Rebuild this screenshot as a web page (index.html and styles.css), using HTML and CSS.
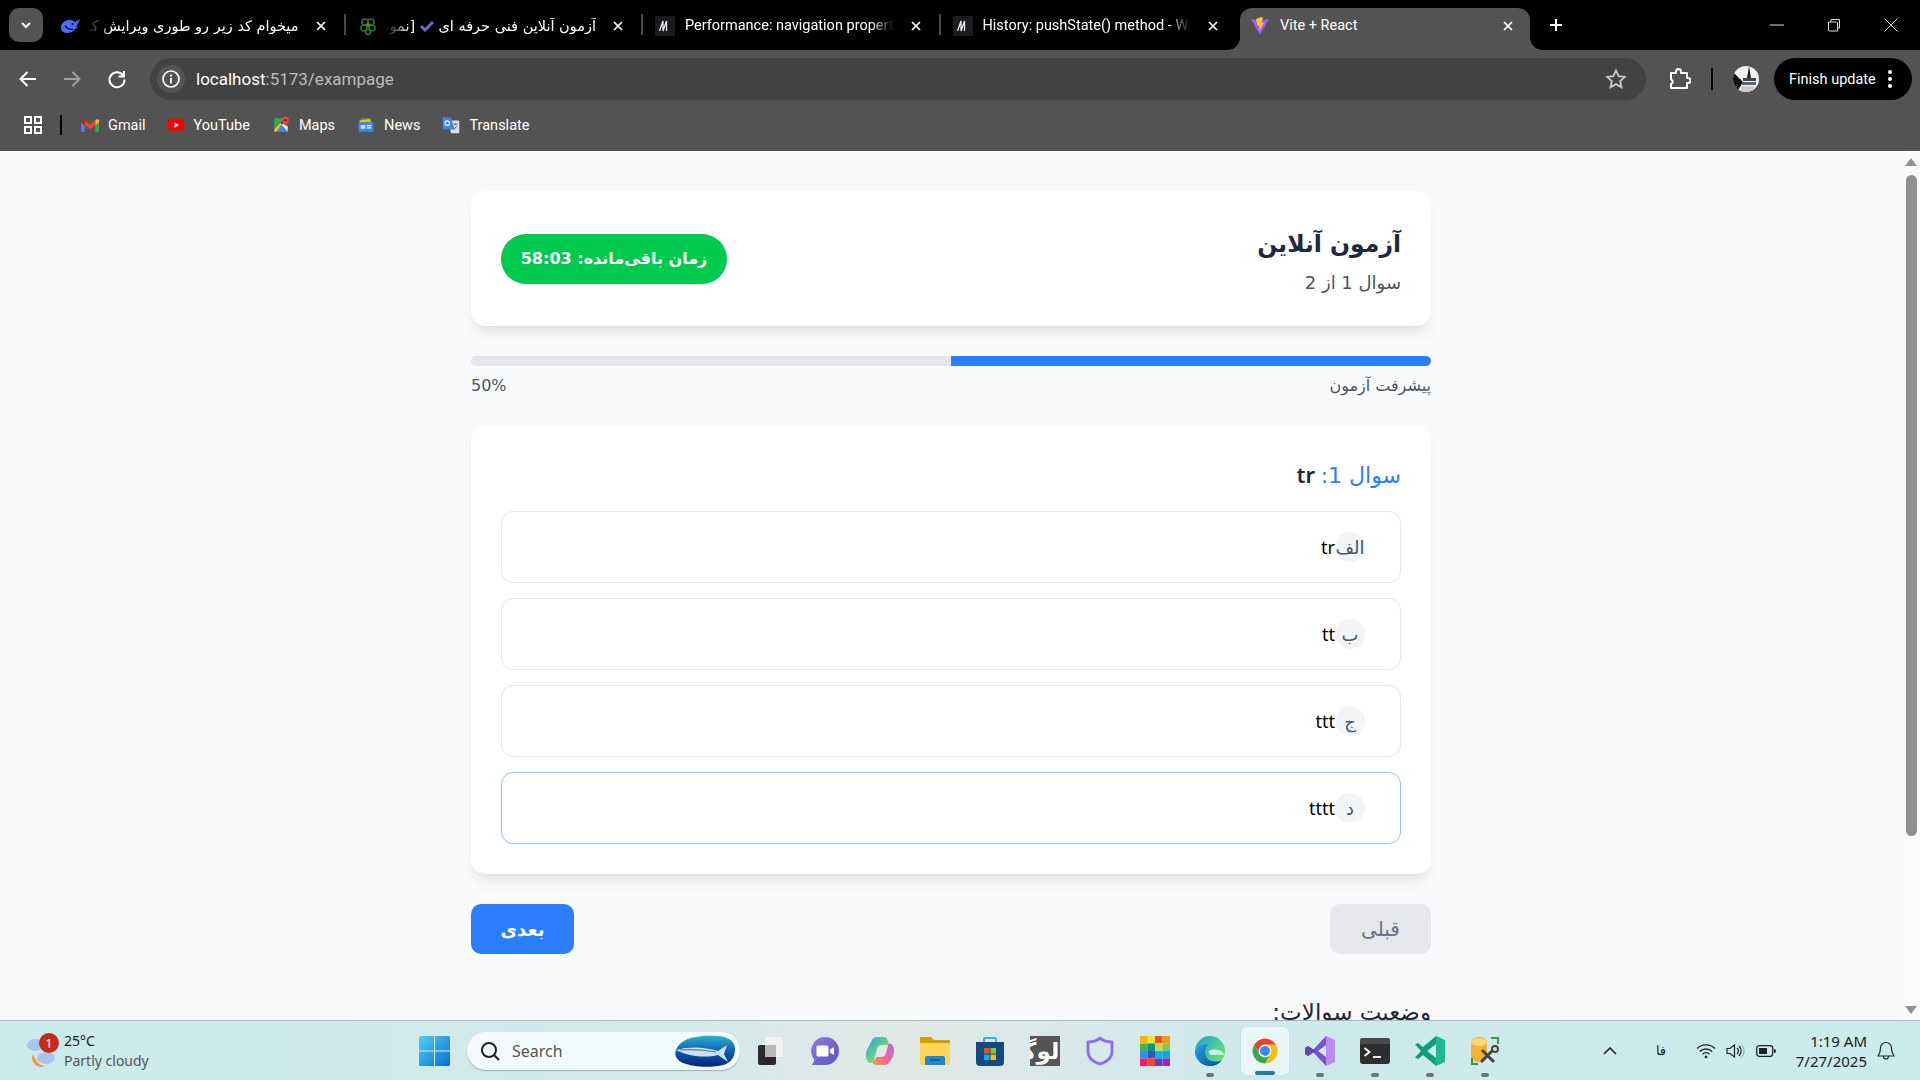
FILE: index.html
```html
<!DOCTYPE html>
<html lang="fa">
<head>
<meta charset="utf-8">
<title>Vite + React</title>
<link rel="stylesheet" href="styles.css">
</head>
<body>
<div class="screen">
  <header class="chrome">
    <div class="tabstrip">
      <button class="tabsearch"><svg width="14" height="14" viewBox="0 0 14 14"><path d="M3 5l4 4 4-4" fill="none" stroke="#fff" stroke-width="2"/></svg></button>
      <div class="tab sep">
        <svg class="fav" viewBox="0 0 20 20"><path d="M20 3c-1 .3-1.700 1-2.200 2-1-.6-1.700.3-2.300 1.200C13.500 4.500 11 3.500 8 4 3.500 5 .3 8.500 1 12.500c.6 3.500 4 5 7.500 4.500 3-.4 5.500-2 6.500-4.500 1 .4 2.300-.2 3-1.500-1 .3-1.600.1-1.800-.5C17.500 8.500 19 6 20 3z" fill="#4d6bfe"/><circle cx="12.500" cy="8" r="1.100" fill="#000"/><path d="M5 9.500c1.500 3 5 4.500 8 3.500" stroke="#000" stroke-width="1.300" fill="none"/></svg>
        <span class="tabtext rtl fade-left">میخوام کد زیر رو طوری ویرایش کن</span>
        <svg class="close" viewBox="0 0 12 12"><path d="M2 2l8 8M10 2l-8 8" stroke="#fff" stroke-width="1.700"/></svg>
      </div>
      <div class="tab sep">
        <svg class="fav" viewBox="0 0 20 20"><g fill="none" stroke="#1f7a2e" stroke-width="1.600"><circle cx="7" cy="6" r="3"/><circle cx="13" cy="6" r="3"/><circle cx="6" cy="12" r="3"/><circle cx="14" cy="12" r="3"/><circle cx="10" cy="16" r="2.500"/></g><circle cx="10" cy="9" r="2" fill="#a8651c"/></svg>
        <span class="tabtext rtl fade-left">آزمون آنلاین فنی حرفه ای <svg class="check" viewBox="0 0 14 12"><path d="M1 6l4 4 8-8" fill="none" stroke="#7a5fd0" stroke-width="3"/></svg> [نمونه سوالات</span>
        <svg class="close" viewBox="0 0 12 12"><path d="M2 2l8 8M10 2l-8 8" stroke="#fff" stroke-width="1.700"/></svg>
      </div>
      <div class="tab sep">
        <svg class="fav" viewBox="0 0 20 20"><rect width="20" height="20" fill="#1b1b20"/><path d="M4.500 15L8 5v10l3.500-10v10" fill="none" stroke="#e8e8e8" stroke-width="1.300"/></svg>
        <span class="tabtext fade-right">Performance: navigation property</span>
        <svg class="close" viewBox="0 0 12 12"><path d="M2 2l8 8M10 2l-8 8" stroke="#fff" stroke-width="1.700"/></svg>
      </div>
      <div class="tab">
        <svg class="fav" viewBox="0 0 20 20"><rect width="20" height="20" fill="#1b1b20"/><path d="M4.500 15L8 5v10l3.500-10v10" fill="none" stroke="#e8e8e8" stroke-width="1.300"/></svg>
        <span class="tabtext fade-right">History: pushState() method - Web</span>
        <svg class="close" viewBox="0 0 12 12"><path d="M2 2l8 8M10 2l-8 8" stroke="#fff" stroke-width="1.700"/></svg>
      </div>
      <div class="tab active">
        <svg class="fav" viewBox="0 0 20 20"><path d="M1 3l9 16 9-16-4 .8L10 5 5 3.800z" fill="#9d5cf5"/><path d="M11 1L6 3l1.500 7 2-.5-.5 6 5-9-2.500.5 1.500-5z" fill="#ffc81f"/></svg>
        <span class="tabtext">Vite + React</span>
        <svg class="close" viewBox="0 0 12 12"><path d="M2 2l8 8M10 2l-8 8" stroke="#fff" stroke-width="1.700"/></svg>
      </div>
      <svg class="newtab" viewBox="0 0 14 14"><path d="M7 1v12M1 7h12" stroke="#fff" stroke-width="2"/></svg>
      <div class="winctl">
        <svg viewBox="0 0 14 14" width="14" height="14"><path d="M0 7h14" stroke="#ddd" stroke-width="1"/></svg>
        <svg viewBox="0 0 14 14" width="14" height="14"><path d="M1.500 4h8a1 1 0 0 1 1 1v8h-8a1 1 0 0 1-1-1zM4 4V1.500h8.500V10H10.500" fill="none" stroke="#ddd" stroke-width="1"/></svg>
        <svg viewBox="0 0 14 14" width="14" height="14"><path d="M.5.5l13 13M13.500.5l-13 13" stroke="#ddd" stroke-width="1"/></svg>
      </div>
    </div>

    <div class="navbar">
      <svg class="navicon" viewBox="0 0 24 24"><path d="M20 12H5M11.500 5L4.500 12l7 7" fill="none" stroke="#fff" stroke-width="2"/></svg>
      <svg class="navicon" viewBox="0 0 24 24"><path d="M4 12h15M12.500 5l7 7-7 7" fill="none" stroke="#a0a0a0" stroke-width="2"/></svg>
      <svg class="navicon" viewBox="0 0 24 24"><path d="M18.500 9A7.500 7.500 0 1 0 19.500 12.500M19 4v5.500h-5.500" fill="none" stroke="#fff" stroke-width="2"/></svg>
      <div class="omnibox">
        <span class="infochip"><svg width="20" height="20" viewBox="0 0 20 20"><circle cx="10" cy="10" r="8" fill="none" stroke="#fff" stroke-width="1.700"/><path d="M10 9v5.500M10 5.500v2" stroke="#fff" stroke-width="1.800"/></svg></span>
        <span class="url"><b>localhost</b>:5173/exampage</span>
        <svg class="star" viewBox="0 0 24 24"><path d="M12 3.500l2.600 5.700 6.200.7-4.600 4.200 1.300 6.100L12 17.100l-5.500 3.100 1.300-6.100L3.200 9.900l6.200-.7z" fill="none" stroke="#c9c9c9" stroke-width="1.800"/></svg>
      </div>
      <svg class="puzzle" viewBox="0 0 24 24"><path d="M4 6h5V4.500a2.500 2.500 0 0 1 5 0V6h6v5h1a2.500 2.500 0 0 1 0 5h-1v5H4v-4a2.500 2.500 0 0 0 1.500-3.200L4 12z" fill="none" stroke="#fff" stroke-width="2" stroke-linejoin="round"/></svg>
      <span class="toolsep"></span>
      <svg class="avatar" viewBox="0 0 26 26"><clipPath id="av"><circle cx="13" cy="13" r="13"/></clipPath><g clip-path="url(#av)"><rect width="26" height="26" fill="#f2f2f2"/><path d="M0 6l10 10-6 10H0z" fill="#111"/><rect x="10" y="12" width="13" height="3" fill="#3c4650"/><rect x="9" y="16" width="14" height="3" fill="#5a6570"/><path d="M16 0l2 12h-4z" fill="#222"/><rect x="8" y="20" width="13" height="6" fill="#cfcaca"/></g></svg>
      <div class="update"><span>Finish update</span><svg width="6" height="20" viewBox="0 0 6 20"><circle cx="3" cy="3" r="2" fill="#fff"/><circle cx="3" cy="10" r="2" fill="#fff"/><circle cx="3" cy="17" r="2" fill="#fff"/></svg></div>
    </div>

    <nav class="bookmarks">
      <svg class="apps" viewBox="0 0 18 18"><g fill="none" stroke="#fff" stroke-width="2"><rect x="1" y="1" width="6" height="6"/><rect x="11" y="1" width="6" height="6"/><rect x="1" y="11" width="6" height="6"/><rect x="11" y="11" width="6" height="6"/></g></svg>
      <span class="marksep"></span>
      <a class="mark gmail"><svg viewBox="0 0 24 24"><path fill="#4285f4" d="M1.500 21H5V12.500L0 8.750V19.500C0 20.330.67 21 1.500 21z"/><path fill="#34a853" d="M19 21h3.500c.83 0 1.500-.67 1.500-1.500V8.750L19 12.500z"/><path fill="#fbbc04" d="M19 6v6.500l5-3.750V6.500c0-1.850-2.100-2.900-3.600-1.800z"/><path fill="#ea4335" d="M5 12.500V6l7 5.250L19 6v6.500l-7 5.250z"/><path fill="#c5221f" d="M0 6.500v2.250l5 3.750V6L3.600 4.950C2.100 3.850 0 4.650 0 6.500z"/></svg>Gmail</a>
      <a class="mark yt"><svg viewBox="0 0 24 24"><rect x="1" y="4" width="22" height="16" rx="5" fill="#f00"/><path d="M10 8.500l6 3.500-6 3.500z" fill="#fff"/></svg>YouTube</a>
      <a class="mark maps"><svg viewBox="0 0 24 24"><path d="M3 3h13L3 18z" fill="#34a853"/><path d="M3 18v3h3l8-9-3-3z" fill="#fbbc04"/><path d="M6 21h15L12 12z" fill="#4285f4"/><path d="M21 21V14l-5-4-3 2z" fill="#e8eaed"/><path d="M18 1a4.500 4.500 0 0 0-4.500 4.500C13.500 9 18 13 18 13s4.500-4 4.500-7.500A4.500 4.500 0 0 0 18 1z" fill="#ea4335"/><circle cx="18" cy="5.500" r="1.600" fill="#a50e0e"/></svg>Maps</a>
      <a class="mark news"><svg viewBox="0 0 24 24"><path d="M5 3h14v5H5z" fill="#34a853"/><path d="M3 6l14-2 2 5H4z" fill="#fbbc04"/><rect x="2" y="8" width="20" height="13" rx="2" fill="#4285f4"/><path d="M5 12h6v5H5z" fill="#cfe0fb"/><path d="M13 12h6v1.500h-6zM13 15h6v1.500h-6z" fill="#fff"/></svg>News</a>
      <a class="mark translate"><svg viewBox="0 0 24 24"><path d="M9 6h13a1 1 0 0 1 1 1v15a1 1 0 0 1-1 1H12z" fill="#dadce0"/><path d="M2 2h10l5 16H2a1 1 0 0 1-1-1V3a1 1 0 0 1 1-1z" fill="#4285f4"/><circle cx="7" cy="9.500" r="3" fill="none" stroke="#fff" stroke-width="1.500"/><path d="M15 11h6M18 10v2M16 18l4-5" stroke="#5f6368" stroke-width="1.200" fill="none"/></svg>Translate</a>
    </nav>
  </header>

  <div class="viewport">
    <main class="page" dir="rtl">
      <div class="exam">
        <section class="card head">
          <div class="headinfo">
            <h1 class="title">آزمون آنلاین</h1>
            <p class="subtitle">سوال 1 از 2</p>
          </div>
          <div class="timer">زمان باقی‌مانده: 58:03</div>
        </section>

        <section class="progress">
          <div class="track"><div class="fill" style="width:50%"></div></div>
          <div class="proglabels"><span>پیشرفت آزمون</span><span>50%</span></div>
        </section>

        <section class="card question">
          <h2 class="qtitle"><span class="qnum">سوال 1:</span> tr</h2>
          <div class="options">
            <div class="option"><span class="letter">الف</span><span class="opttext">tr</span></div>
            <div class="option"><span class="letter">ب</span><span class="opttext">tt</span></div>
            <div class="option"><span class="letter">ج</span><span class="opttext">ttt</span></div>
            <div class="option selected"><span class="letter">د</span><span class="opttext">tttt</span></div>
          </div>
        </section>

        <div class="actions">
          <button class="btn prev">قبلی</button>
          <button class="btn next">بعدی</button>
        </div>

        <h3 class="status">وضعیت سوالات:</h3>
      </div>
    </main>
    <div class="scrollbar">
      <svg width="12" height="8" viewBox="0 0 12 8"><path d="M6 0l6 8H0z" fill="#909090"/></svg>
      <span class="thumb"></span>
      <svg class="down" width="12" height="8" viewBox="0 0 12 8"><path d="M0 0h12L6 8z" fill="#909090"/></svg>
    </div>
  </div>

  <footer class="taskbar">
    <div class="weather">
      <span class="wicon">
        <svg width="32" height="34" viewBox="0 0 32 34"><path d="M8 20a9 9 0 0 0 12 12c-5 0-10-5-12-12z" fill="#f29a2e"/><ellipse cx="10" cy="11" rx="8" ry="6" fill="#a9c4ee"/><ellipse cx="21" cy="24" rx="9" ry="6" fill="#a9c4ee"/></svg>
        <span class="wbadge">1</span>
      </span>
      <div class="wtext"><span class="temp">25°C</span><span class="cond">Partly cloudy</span></div>
    </div>
    <svg class="winlogo" viewBox="0 0 31 30"><defs><linearGradient id="wl" x1="0" y1="0" x2="1" y2="1"><stop offset="0" stop-color="#4ed0f5"/><stop offset="1" stop-color="#0a6fd0"/></linearGradient></defs><path fill="url(#wl)" d="M0 1.500A1.500 1.500 0 0 1 1.500 0H15v14.500H0zM16 0h13.500A1.500 1.500 0 0 1 31 1.500v13H16zM0 15.500h15V30H1.500A1.500 1.500 0 0 1 0 28.500zM16 15.500h15v13a1.500 1.500 0 0 1-1.500 1.500H16z"/></svg>
    <div class="searchbox">
      <svg width="22" height="22" viewBox="0 0 22 22"><circle cx="10" cy="10" r="7" fill="none" stroke="#222" stroke-width="2"/><path d="M15 15l5 5" stroke="#222" stroke-width="2.200"/></svg>
      <span>Search</span>
      <svg class="fish" width="62" height="32" viewBox="0 0 62 32"><defs><linearGradient id="fb" x1="0" y1="0" x2="0" y2="1"><stop offset="0" stop-color="#2bb2cf"/><stop offset=".5" stop-color="#0e5ea8"/><stop offset="1" stop-color="#06237e"/></linearGradient></defs><path d="M6 10C12 2 30 0 44 1c10 .5 17 4 18 12 .5 8-4 15-12 17-12 3-30 2-40-2C3 25-1 18 6 10z" fill="url(#fb)"/><path d="M3 15c14-4 28-3 42 1l9-6-3 9 4 8-10-7c-12 3-28 2-42-5z" fill="#cfdfec"/><path d="M7 15c12-1 24 0 36 2" stroke="#5b7fa8" stroke-width="1.200" fill="none"/></svg>
    </div>
    <svg class="taskview" viewBox="0 0 25 28"><rect y="8" width="18" height="20" rx="2" fill="#2a2a2a"/><rect x="7" width="18" height="20" rx="2" fill="#f5f5f5" fill-opacity=".85"/><rect x="7" y="8" width="11" height="12" fill="#b8b8b8"/></svg>

    <div class="apps-row">
      <div class="app"><svg viewBox="0 0 30 30"><defs><linearGradient id="mt" x1="0" y1="0" x2="1" y2="1"><stop offset="0" stop-color="#8f7bd8"/><stop offset="1" stop-color="#5a55c4"/></linearGradient></defs><path d="M15 1a14 14 0 0 1 0 28H2l2.500-5A14 14 0 0 1 15 1z" fill="url(#mt)"/><rect x="6.500" y="9.500" width="12" height="11" rx="1.500" fill="#fff"/><path d="M20 13.500l4-2.500v8l-4-2.500z" fill="#fff"/></svg></div>
      <div class="app"><svg viewBox="0 0 30 30"><defs><linearGradient id="c1" x1="0" y1="0" x2="1" y2="1"><stop offset="0" stop-color="#2f9bf0"/><stop offset=".5" stop-color="#5fd08a"/><stop offset="1" stop-color="#f2c84b"/></linearGradient><linearGradient id="c2" x1="1" y1="0" x2="0" y2="1"><stop offset="0" stop-color="#b765e8"/><stop offset=".6" stop-color="#f06b8a"/><stop offset="1" stop-color="#f6a04a"/></linearGradient></defs><path d="M12 1h7c2 0 3 1 3.500 3l2 5H17c-3 0-4 1-5 4l-3 11c-.5 2-2 3-4 3-1 0-2-1-3-3-2-4-1-9 1-12l4-8c1-2 3-3 5-3z" fill="url(#c1)"/><path d="M18 29h-7c-2 0-3-1-3.500-3L12 21h4c3 0 4-1 5-4l2-7c.5-2 2-3 3-2 3 2 4 7 2 12-1 3-3 5-4 7-1 1.500-3 2-6 2z" fill="url(#c2)"/></svg></div>
      <div class="app"><svg viewBox="0 0 30 30"><path d="M0 2a1 1 0 0 1 1-1h10l3 3h15a1 1 0 0 1 1 1v4H0z" fill="#d6a000"/><path d="M0 7h30v21a1 1 0 0 1-1 1H1a1 1 0 0 1-1-1z" fill="#fdd55c"/><path d="M5 29v-7a2 2 0 0 1 2-2h16a2 2 0 0 1 2 2v7z" fill="#1f87d2"/><path d="M10 24h10" stroke="#0d4f8b" stroke-width="1.500"/></svg></div>
      <div class="app"><svg viewBox="0 0 30 30"><path d="M9 6V3a1 1 0 0 1 1-1h10a1 1 0 0 1 1 1v3" fill="none" stroke="#2bb3e8" stroke-width="1.800"/><path d="M1 6h28v20a4 4 0 0 1-4 4H5a4 4 0 0 1-4-4z" fill="#144a82"/><rect x="9" y="12" width="5.500" height="5.500" fill="#f1511b"/><rect x="15.500" y="12" width="5.500" height="5.500" fill="#80cc28"/><rect x="9" y="18.500" width="5.500" height="5.500" fill="#00adef"/><rect x="15.500" y="18.500" width="5.500" height="5.500" fill="#fbbc09"/></svg></div>
      <div class="app"><span class="logobox"><span>لوگو</span></span></div>
      <div class="app"><svg viewBox="0 0 30 30"><path d="M15 2c3 3 7 4 12 4v9c0 7-5 11-12 13C8 26 3 22 3 15V6c5 0 9-1 12-4z" fill="none" stroke="#8a6cf0" stroke-width="2.800" stroke-linejoin="round"/></svg></div>
      <div class="app"><svg viewBox="0 0 30 30"><rect width="7.500" height="7.500" fill="#ffb300"/><rect x="7.500" width="7.500" height="7.500" fill="#ffe030"/><rect x="15" width="7.500" height="7.500" fill="#f4511e"/><rect x="22.500" width="7.500" height="7.500" fill="#ff9800"/><rect y="7.500" width="7.500" height="7.500" fill="#4caf50"/><rect x="7.500" y="7.500" width="7.500" height="7.500" fill="#009688"/><rect x="15" y="7.500" width="7.500" height="7.500" fill="#cddc39"/><rect x="22.500" y="7.500" width="7.500" height="7.500" fill="#8bc34a"/><rect y="15" width="7.500" height="7.500" fill="#2196f3"/><rect x="7.500" y="15" width="7.500" height="7.500" fill="#3f51b5"/><rect x="15" y="15" width="7.500" height="7.500" fill="#00bcd4"/><rect x="22.500" y="15" width="7.500" height="7.500" fill="#03a9f4"/><rect y="22.500" width="7.500" height="7.500" fill="#e91e63"/><rect x="7.500" y="22.500" width="7.500" height="7.500" fill="#f44336"/><rect x="15" y="22.500" width="7.500" height="7.500" fill="#673ab7"/><rect x="22.500" y="22.500" width="7.500" height="7.500" fill="#9c27b0"/></svg></div>
      <div class="app dot"><svg viewBox="0 0 30 30"><defs><linearGradient id="eg" x1="0" y1="0" x2="1" y2=".7"><stop offset="0" stop-color="#1e9fd8"/><stop offset="1" stop-color="#66e56f"/></linearGradient><linearGradient id="eb" x1="0" y1="0" x2="1" y2="1"><stop offset="0" stop-color="#1fa5e6"/><stop offset="1" stop-color="#0a4a9a"/></linearGradient></defs><circle cx="15" cy="15" r="15" fill="url(#eg)"/><path d="M14 8C7 8 1 11 0 16c.5 8 7 14 15 14 5 0 9-2 12-6-2 1-4 1.500-7 1.500-6 0-10-4-10-9 0-4 2-7 4-8.500z" fill="url(#eb)"/><path d="M14 15c3-2 8-2 12 0 2 1 3 3 3 4H17c-2 0-4-2-3-4z" fill="#d2eaec"/></svg></div>
      <div class="app current"><svg viewBox="0 0 48 48"><path fill="#ea4335" d="M24 14h17.320A20 20 0 0 0 6.680 14L15.340 29A10 10 0 0 1 24 14z"/><path fill="#fbbc04" d="M24 14h17.320A20 20 0 0 1 24 44L32.660 29A10 10 0 0 0 24 14z"/><path fill="#34a853" d="M32.660 29L24 44A20 20 0 0 1 6.680 14L15.340 29A10 10 0 0 0 32.660 29z"/><circle cx="24" cy="24" r="10" fill="#fff"/><circle cx="24" cy="24" r="8" fill="#4285f4"/></svg></div>
      <div class="app dot"><svg viewBox="0 0 30 30"><path d="M21 0l9 4v22l-9 4z" fill="#b98af0"/><path d="M21 0L8 14l-5-4-3 2v6l3 2 5-4 13 14v-9l-8-6 8-6z" fill="#7a55c8"/><path d="M0 12l3-2 8 5-8 5-3-2z" fill="#6a46ad"/></svg></div>
      <div class="app dot"><svg viewBox="0 0 30 30"><rect y="2" width="30" height="26" rx="3" fill="#2e2e2e"/><path d="M0 5a3 3 0 0 1 3-3h24a3 3 0 0 1 3 3v3H0z" fill="#4a4a4a"/><path d="M4.500 12l5 4-5 4" fill="none" stroke="#fff" stroke-width="1.800"/><path d="M13 21h8" stroke="#e8e8e8" stroke-width="2"/></svg></div>
      <div class="app dot"><svg viewBox="0 0 30 30"><path d="M21 0l9 4v22l-9 4z" fill="#1fb897"/><path d="M21 0v8l-9 7 9 7v8L8 19l-5 4-3-1.500L6 15 0 8.500 3 7l5 4z" fill="#0f9e7d"/></svg></div>
      <div class="app dot"><svg viewBox="0 0 30 30"><path d="M1 6c0-3 4-5 8-5s8 2 8 5v15c0 3-4 5-8 5s-8-2-8-5z" fill="#f2b430"/><ellipse cx="9" cy="6" rx="8" ry="4" fill="#f8d878"/><path d="M21 2h7v6M2 22v6h6" fill="none" stroke="#3a9a3a" stroke-width="2"/><path d="M11 26l12-12M12 14l12 12" stroke="#444" stroke-width="3"/><circle cx="25" cy="13" r="3" fill="none" stroke="#444" stroke-width="2"/></svg></div>
    </div>

    <div class="tray">
      <svg class="chev" width="14" height="8" viewBox="0 0 14 8"><path d="M1 7l6-6 6 6" fill="none" stroke="#222" stroke-width="1.600"/></svg>
      <span class="lang">فا</span>
      <svg class="wifi" width="20" height="16" viewBox="0 0 20 16"><g fill="none" stroke="#222" stroke-width="1.300"><path d="M1 5.500a13 13 0 0 1 18 0M3.800 8.500a9 9 0 0 1 12.400 0M6.500 11.200a5 5 0 0 1 7 0"/></g><circle cx="10" cy="14" r="1.400" fill="#222"/></svg>
      <svg class="speaker" width="20" height="16" viewBox="0 0 20 16"><path d="M1 5.500h3L8.500 2v12L4 10.500H1z" fill="none" stroke="#222" stroke-width="1.200"/><path d="M11 5a4 4 0 0 1 0 6M13 3a7 7 0 0 1 0 10" fill="none" stroke="#222" stroke-width="1.200"/><path d="M15.500 1.500a9.500 9.500 0 0 1 0 13" fill="none" stroke="#9aa" stroke-width="1"/></svg>
      <svg class="batt" width="20" height="12" viewBox="0 0 20 12"><rect x=".7" y=".7" width="16" height="10.600" rx="2.500" fill="none" stroke="#222" stroke-width="1.300"/><rect x="3" y="3" width="8" height="6" fill="#222"/><path d="M18 4v4a2 2 0 0 0 0-4z" fill="#222"/></svg>
      <div class="clock"><span>1:19 AM</span><span>7/27/2025</span></div>
      <svg class="bell" width="18" height="20" viewBox="0 0 18 20"><path d="M9 1.500a5.500 5.500 0 0 0-5.500 5.500c0 5-2 7-2.500 8h16c-.5-1-2.500-3-2.500-8A5.500 5.500 0 0 0 9 1.500zM6.500 15.500a2.500 2.500 0 0 0 5 0" fill="none" stroke="#222" stroke-width="1.200"/></svg>
    </div>
  </footer>
</div>
</body>
</html>
```

FILE: styles.css
```css
* { box-sizing: border-box; }
html, body { margin: 0; height: 100%; overflow: hidden; }
body { font-family: "Noto Sans", "DejaVu Sans", sans-serif; }
h1, h2, h3, p { margin: 0; }

.screen { display: flex; flex-direction: column; width: 1920px; height: 1080px; }

/* browser chrome */
.chrome { flex: none; height: 151px; background: #535353; font-family: Roboto, "DejaVu Sans", sans-serif; color: #fff; }
.tabstrip { display: flex; height: 50px; background: #000; align-items: flex-end; }
.tabsearch { flex: none; width: 34px; height: 34px; margin: 0 5px 8px 9px; padding: 0; display: flex; align-items: center; justify-content: center; background: #535353; border: 0; border-radius: 10px; }
.tab { flex: none; position: relative; display: flex; align-items: center; width: 297.5px; height: 42px; padding: 0 15px 7px 12px; font-size: 14.500px; }
.tab.sep::after { content: ""; position: absolute; right: 0; top: 6px; height: 21px; width: 2px; background: #4a4a4a; }
.tab.active { width: 290px; margin-left: 2px; background: #535353; border-radius: 12px 12px 0 0; padding: 0 12px 7px 10px; }
.tab.active::before, .tab.active::after { content: ""; position: absolute; bottom: 0; width: 12px; height: 12px; }
.tab.active::before { left: -12px; background: radial-gradient(circle at 0 0, #000 11.500px, #535353 12px); }
.tab.active::after { right: -12px; background: radial-gradient(circle at 100% 0, #000 11.500px, #535353 12px); }
.fav { flex: none; width: 20px; height: 20px; margin-right: 8px; }
.tabtext { flex: 1; min-width: 0; white-space: nowrap; overflow: hidden; padding-left: 2px; margin-right: 12px; }
.tabtext.rtl { direction: rtl; font-family: "DejaVu Sans", sans-serif; font-size: 14.500px; }
.fade-left { -webkit-mask-image: linear-gradient(to right, transparent 0, #000 24px); mask-image: linear-gradient(to right, transparent 0, #000 24px); }
.fade-right { -webkit-mask-image: linear-gradient(to left, transparent 0, #000 24px); mask-image: linear-gradient(to left, transparent 0, #000 24px); }
.check { width: 14px; height: 12px; vertical-align: -1px; }
.close { flex: none; width: 12px; height: 12px; margin: 0 4px; }
.newtab { flex: none; width: 14px; height: 14px; margin: 0 0 18px 19px; }
.winctl { display: flex; gap: 43px; margin: 0 0 18px auto; padding-right: 22px; }

.navbar { display: flex; align-items: center; height: 50px; padding: 8px 8px 0 16px; }
.navicon { flex: none; width: 24px; height: 24px; margin-right: 20px; }
.navicon + .navicon + .navicon { margin-left: 1px; }
.omnibox { flex: none; display: flex; align-items: center; width: 1496px; height: 42px; margin-left: 1px; background: #424242; border-radius: 21px; padding: 0 18px 0 7px; }
.infochip { flex: none; display: flex; align-items: center; justify-content: center; width: 28px; height: 28px; border-radius: 50%; background: #535353; }
.url { margin-left: 11px; font-size: 17px; color: #bdbdbd; }
.url b { font-weight: 400; color: #fff; }
.star { width: 24px; height: 24px; margin-left: auto; }
.puzzle { flex: none; width: 24px; height: 24px; margin-left: 21px; }
.toolsep { flex: none; width: 2px; height: 22px; margin-left: 20px; background: #000; }
.avatar { flex: none; width: 26px; height: 26px; margin-left: 20px; }
.update { flex: none; display: flex; align-items: center; gap: 11px; width: 138px; height: 42px; margin-left: 15px; padding: 0 0 0 15px; background: #000; border-radius: 21px; font-size: 14.500px; }

.bookmarks { display: flex; align-items: center; height: 50px; padding-left: 24px; font-size: 14.500px; }
.apps { flex: none; width: 18px; height: 18px; }
.marksep { flex: none; width: 2px; height: 20px; margin: 0 19px 0 18px; background: #000; }
.mark { display: flex; align-items: center; gap: 9px; color: #fff; }
.mark svg { flex: none; width: 18px; height: 18px; }
.yt { margin-left: 21px; }
.maps { margin-left: 22px; }
.news { margin-left: 22px; }
.translate { margin-left: 22px; }

/* page */
.viewport { flex: 1; min-height: 0; display: flex; }
.page { flex: 1; min-width: 0; height: 100%; overflow: hidden; background: #f9fafb; padding-top: 40px; font-family: "Noto Sans", "DejaVu Sans", sans-serif; }
.exam { width: 960px; margin: 0 auto; }
.card { background: #fff; border-radius: 14px; box-shadow: 0 10px 15px -3px rgba(0,0,0,.08), 0 4px 6px -4px rgba(0,0,0,.08); }
.head { display: flex; align-items: center; justify-content: space-between; padding: 30px; height: 135px; }
.headinfo { margin-top: 4px; }
.title { font-size: 23.500px; line-height: 40px; font-weight: 700; color: #1e2939; font-family: "DejaVu Sans", sans-serif; }
.subtitle { margin-top: 4px; font-size: 18px; line-height: 30px; color: #4a5565; font-family: "DejaVu Sans", sans-serif; }
.timer { width: 226px; height: 50px; line-height: 50px; text-align: center; border-radius: 25px; background: #00c950; color: #fff; font-weight: 700; font-size: 16px; font-family: "DejaVu Sans", sans-serif; }

.progress { margin-top: 30px; }
.track { height: 10px; border-radius: 5px; background: #e5e7eb; overflow: hidden; }
.fill { height: 100%; background: #2b7fff; }
.proglabels { display: flex; justify-content: space-between; margin-top: 8px; height: 24px; line-height: 24px; font-size: 16px; color: #4a5565; font-family: "DejaVu Sans", sans-serif; }

.question { margin-top: 28px; padding: 30px; }
.qtitle { height: 40px; font-size: 22px; line-height: 36px; font-weight: 600; color: #1e2939; margin-bottom: 15px; font-family: "Noto Sans", "DejaVu Sans", sans-serif; }
.qnum { color: #2b7fff; font-weight: 400; line-height: 1; font-family: "DejaVu Sans", sans-serif; }
.options { display: flex; flex-direction: column; gap: 15px; }
.option { display: flex; align-items: center; height: 72px; padding: 0 35px; border: 1px solid #e5e7eb; border-radius: 12px; background: #fff; }
.option.selected { border-color: #8ec5ff; }
.letter { flex: none; display: flex; align-items: center; justify-content: center; width: 30px; height: 30px; border-radius: 50%; background: #f3f4f6; color: #4a5565; font-size: 18px; white-space: nowrap; font-family: "DejaVu Sans", sans-serif; }
.opttext { font-size: 18px; color: #000; }

.actions { display: flex; justify-content: space-between; margin-top: 30px; }
.btn { height: 50px; border: 0; border-radius: 10px; font-size: 20px; font-family: "DejaVu Sans", sans-serif; }
.prev { width: 101px; background: #e5e7eb; color: #6a7282; }
.next { width: 103px; background: #2b7fff; color: #fff; font-weight: 700; font-size: 18px; }
.status { margin-top: 40px; font-size: 23px; line-height: 36px; font-weight: 500; color: #1e2939; font-family: "DejaVu Sans", sans-serif; }

.scrollbar { flex: none; width: 18px; background: #fbfbfb; display: flex; flex-direction: column; align-items: center; padding-top: 7px; }
.thumb { width: 11px; height: 661px; margin-top: 9px; background: #909090; border-radius: 6px; }
.down { margin-top: auto; margin-bottom: 6px; }

/* taskbar */
.taskbar { flex: none; display: flex; align-items: center; height: 60px; border-top: 1px solid #a9b8ba; background: linear-gradient(90deg, #cbeaec 0, #d4e9ea 35%, #e1e8e6 47%, #cfe9ec 65%, #caebed 100%); font-family: "Noto Sans", "DejaVu Sans", sans-serif; color: #1a1a1a; }
.weather { flex: none; display: flex; align-items: center; width: 419px; padding-left: 25px; }
.wicon { position: relative; flex: none; width: 39px; height: 34px; }
.wbadge { position: absolute; left: 14px; top: -1px; width: 20px; height: 20px; border-radius: 50%; background: #c42b1c; color: #fff; font-size: 13px; line-height: 20px; text-align: center; }
.wtext { display: flex; flex-direction: column; font-size: 14px; line-height: 20px; }
.cond { color: #555; }
.winlogo { flex: none; width: 31px; height: 30px; }
.searchbox { flex: none; display: flex; align-items: center; width: 273px; height: 38px; margin-left: 17px; padding: 0 5px 0 12px; background: #f2fafb; border-radius: 19px; box-shadow: 0 1px 1px rgba(0,0,0,.25); font-size: 16px; color: #555; }
.searchbox span { margin-left: 11px; }
.fish { margin-left: auto; }
.taskview { flex: none; width: 25px; height: 28px; margin-left: 18px; }
.apps-row { flex: none; display: flex; margin-left: 14px; }
.app { position: relative; display: flex; align-items: center; justify-content: center; width: 55px; height: 48px; }
.app svg { width: 30px; height: 30px; }
.app.dot::after { content: ""; position: absolute; left: 23.500px; bottom: -2px; width: 8px; height: 4px; border-radius: 2px; background: #6b7678; }
.app.current { background: #e9f5f7; border-radius: 5px; width: 48px; margin: 0 3.500px; box-shadow: 0 0 1px rgba(0,0,0,.2); }
.app.current::after { content: ""; position: absolute; left: 14px; bottom: 0; width: 20px; height: 4px; border-radius: 2px; background: #1f8195; }
.logobox { display: flex; align-items: center; justify-content: flex-start; width: 30px; height: 30px; overflow: hidden; background: #555; color: #fff; font-size: 23px; font-weight: 700; font-family: "DejaVu Sans", sans-serif; direction: rtl; }
.logobox span { flex: none; white-space: nowrap; direction: rtl; }
.tray { flex: none; display: flex; align-items: center; margin-left: 91px; }
.lang { margin-left: 34px; width: 20px; text-align: center; font-size: 13px; font-family: "DejaVu Sans", sans-serif; }
.wifi { margin-left: 25px; }
.speaker { margin-left: 10px; }
.batt { margin-left: 10px; }
.clock { display: flex; flex-direction: column; align-items: flex-end; width: 91px; font-size: 15px; line-height: 20px; }
.bell { margin-left: 9.500px; }
```
